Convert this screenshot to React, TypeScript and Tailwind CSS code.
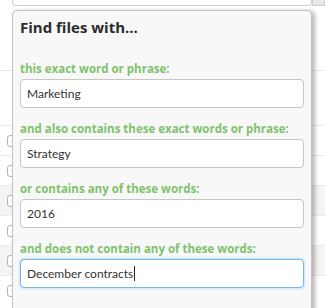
import React from "react";

const fields = [
  { label: "this exact word or phrase:", value: "Marketing" },
  { label: "and also contains these exact words or phrase:", value: "Strategy" },
  { label: "or contains any of these words:", value: "2016" },
  { label: "and does not contain any of these words:", value: "December contracts", focused: true },
];

const rows = ["bg-white", "bg-white", "bg-[#f4f4f4]", "bg-white", "bg-[#f4f4f4]", "bg-white"];

export default function App() {
  return (
    <div className="relative w-[325px] h-[308px] overflow-hidden bg-white font-['Lato','Open_Sans',sans-serif]">
      {/* Page behind the popup */}
      <div className="flex h-[6px]">
        <div className="ml-[12px] flex-1 border border-t-0 border-[#cfcfcf] rounded-b-[4px] bg-white" />
        <div className="w-[13px] border border-t-0 border-[#cccccc] bg-[#e9e9e9]" />
      </div>
      <div className="h-[65px] border-b border-[#e6e6e6]" />
      <div className="h-[54px]" />
      {rows.map((bg, i) => (
        <div
          key={i}
          className={`flex items-center h-[30px] pl-[7px] border-t border-[#ececec] ${bg}`}
        >
          <div className="w-[12px] h-[12px] rounded-[3px] border border-[#b5b5b5] bg-white" />
        </div>
      ))}

      {/* Search popup */}
      <div className="absolute left-[12px] top-[10px] w-[300px] h-[320px] rounded-[5px] border border-[#c2c2c2] bg-[#f8f8f8] shadow-[3px_1px_4px_rgba(0,0,0,0.28)] pl-[7px] pr-[7px] pt-[6px]">
        <h3 className="font-['Open_Sans',sans-serif] text-[15px] leading-[20px] font-bold text-[#2b2b2b]">
          Find files with...
        </h3>
        <div className="mt-[24px] flex flex-col gap-[13px]">
          {fields.map((f) => (
            <div key={f.label} className="flex flex-col gap-[2px]">
              <label className="font-['Open_Sans',sans-serif] text-[11.5px] leading-[16px] font-bold text-[#7fc26c]">
                {f.label}
              </label>
              <div
                className={`flex items-center h-[29px] rounded-[4px] bg-white pl-[6px] text-[12px] text-[#333333] border ${
                  f.focused
                    ? "border-[#74b5ec] shadow-[0_0_3px_rgba(102,175,233,0.6)]"
                    : "border-[#c6c6c6]"
                }`}
              >
                <span>{f.value}</span>
                {f.focused && <span className="ml-[1px] w-[1px] h-[15px] bg-[#222222]" />}
              </div>
            </div>
          ))}
        </div>
      </div>
    </div>
  );
}
